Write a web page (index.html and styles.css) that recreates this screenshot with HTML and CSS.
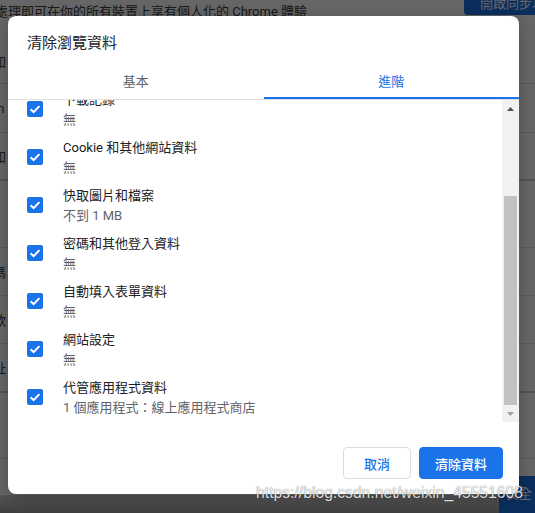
FILE: index.html
```html
<!DOCTYPE html>
<html lang="zh-Hant">
<head>
<meta charset="utf-8">
<title>清除瀏覽資料</title>
<link rel="stylesheet" href="styles.css">
</head>
<body>
<div class="page">
  <div class="page-top">
    <span class="intro">處理即可在你的所有裝置上享有個人化的 Chrome 體驗</span>
    <span class="sync-btn">開啟同步功能</span>
  </div>
  <div class="prow r1"><span class="ptxt">知</span></div>
  <div class="prow r2"><span class="ptxt">m</span></div>
  <div class="prow r3 strong"><span class="ptxt">知</span></div>
  <div class="prow r4"></div>
  <div class="prow r5"><span class="ptxt">碼</span></div>
  <div class="prow r6"><span class="ptxt">款</span></div>
  <div class="prow r7 strong"><span class="ptxt">址</span></div>
  <div class="prow r8"></div>
  <div class="prow r9"><span class="ptxt">o</span></div>
  <div class="pfoot"><span class="go-btn">安全</span></div>
</div>

<div class="scrim"></div>

<div class="dialog">
  <div class="dlg-title">清除瀏覽資料</div>
  <div class="tabs">
    <div class="tab">基本</div>
    <div class="tab active">進階</div>
  </div>
  <div class="scroll">
    <div class="list">
      <div class="list-inner">
        <div class="range">
          <span class="range-label">時間範圍</span>
          <span class="range-select">不限時間</span>
        </div>
        <div class="item">
          <span class="cb"><svg viewBox="0 0 16 16"><path d="M3.6 8.3l3 2.9 5.8-6.1"/></svg></span>
          <div class="txt"><div class="lbl">瀏覽記錄</div><div class="sub">無</div></div>
        </div>
        <div class="item">
          <span class="cb"><svg viewBox="0 0 16 16"><path d="M3.6 8.3l3 2.9 5.8-6.1"/></svg></span>
          <div class="txt"><div class="lbl">下載記錄</div><div class="sub">無</div></div>
        </div>
        <div class="item">
          <span class="cb"><svg viewBox="0 0 16 16"><path d="M3.6 8.3l3 2.9 5.8-6.1"/></svg></span>
          <div class="txt"><div class="lbl">Cookie 和其他網站資料</div><div class="sub">無</div></div>
        </div>
        <div class="item">
          <span class="cb"><svg viewBox="0 0 16 16"><path d="M3.6 8.3l3 2.9 5.8-6.1"/></svg></span>
          <div class="txt"><div class="lbl">快取圖片和檔案</div><div class="sub">不到 1 MB</div></div>
        </div>
        <div class="item">
          <span class="cb"><svg viewBox="0 0 16 16"><path d="M3.6 8.3l3 2.9 5.8-6.1"/></svg></span>
          <div class="txt"><div class="lbl">密碼和其他登入資料</div><div class="sub">無</div></div>
        </div>
        <div class="item">
          <span class="cb"><svg viewBox="0 0 16 16"><path d="M3.6 8.3l3 2.9 5.8-6.1"/></svg></span>
          <div class="txt"><div class="lbl">自動填入表單資料</div><div class="sub">無</div></div>
        </div>
        <div class="item">
          <span class="cb"><svg viewBox="0 0 16 16"><path d="M3.6 8.3l3 2.9 5.8-6.1"/></svg></span>
          <div class="txt"><div class="lbl">網站設定</div><div class="sub">無</div></div>
        </div>
        <div class="item">
          <span class="cb"><svg viewBox="0 0 16 16"><path d="M3.6 8.3l3 2.9 5.8-6.1"/></svg></span>
          <div class="txt"><div class="lbl">代管應用程式資料</div><div class="sub">1 個應用程式：線上應用程式商店</div></div>
        </div>
      </div>
    </div>
    <div class="sbar">
      <div class="sbtn up"><svg viewBox="0 0 7 4"><path d="M0 4L3.5 0L7 4z"/></svg></div>
      <div class="track"><div class="thumb"></div></div>
      <div class="sbtn down"><svg viewBox="0 0 7 4"><path d="M0 0L7 0L3.5 4z"/></svg></div>
    </div>
  </div>
  <div class="footer">
    <button class="btn cancel">取消</button>
    <button class="btn primary">清除資料</button>
  </div>
</div>

<div class="watermark">https://blog.csdn.net/weixin_45551608</div>
</body>
</html>
```

FILE: styles.css
```css
* { box-sizing: border-box; }
html, body { margin: 0; padding: 0; }
body {
  width: 535px;
  height: 513px;
  overflow: hidden;
  position: relative;
  background: #fff;
  font-family: Roboto, "Noto Sans CJK TC", sans-serif;
}

/* underlying settings page */
.page {
  height: 513px;
  display: flex;
  flex-direction: column;
  color: #5f6368;
  font-size: 13px;
  overflow: hidden;
}
.page-top {
  height: 24px;
  flex: none;
  display: flex;
  justify-content: space-between;
  align-items: center;
}
.intro {
  margin-left: -5px;
  white-space: nowrap;
  line-height: 24px;
  color: #3c4043;
}
.sync-btn {
  align-self: flex-start;
  margin-top: -14px;
  height: 29px;
  width: 71px;
  padding: 14px 0 0 16px;
  background: #1a73e8;
  color: #fff;
  font-size: 13px;
  line-height: 8px;
  white-space: nowrap;
  overflow: hidden;
  border-bottom-left-radius: 4px;
}
.prow {
  flex: none;
  display: flex;
  align-items: center;
  border-bottom: 1px solid #e4e4e4;
}
.prow.strong { border-bottom: 2px solid #cfcfcf; }
.ptxt { margin-left: -7px; color: #3c4043; }
.r1 { height: 60px; align-items: flex-end; padding-bottom: 12px; }
.r2 { height: 49px; }
.r3 { height: 48px; }
.r4 { height: 67px; }
.r5 { height: 48px; }
.r6 { height: 48px; }
.r7 { height: 49px; }
.r8 { height: 66px; }
.r9 { height: 36px; align-items: flex-end; padding-bottom: 2px; border-bottom: 0; }
.pfoot {
  flex: 1;
  background: linear-gradient(#d6d6d6, #9a9a9a);
  display: flex;
  justify-content: flex-end;
  align-items: flex-start;
}
.go-btn {
  margin-top: -19px;
  width: 36px;
  height: 38px;
  background: #1a73e8;
  color: #fff;
  font-size: 13px;
  line-height: 16px;
  padding: 10px 0 0 7px;
  white-space: nowrap;
  overflow: hidden;
  border-top-left-radius: 4px;
}

.scrim {
  position: absolute;
  inset: 0;
  background: rgba(0, 0, 0, 0.6);
}

/* dialog */
.dialog {
  position: absolute;
  left: 8px;
  top: 16px;
  width: 511px;
  height: 478px;
  background: #fff;
  border-radius: 8px;
  box-shadow: 0 4px 16px rgba(0, 0, 0, 0.25);
  display: flex;
  flex-direction: column;
  overflow: hidden;
}
.dlg-title {
  padding: 17px 19px 10px;
  font-size: 15px;
  line-height: 20px;
  color: #202124;
}
.tabs {
  display: flex;
  border-bottom: 1px solid #e0e0e0;
}
.tab {
  flex: 1;
  height: 36px;
  display: flex;
  align-items: center;
  justify-content: center;
  font-size: 13px;
  color: #5f6368;
  border-bottom: 2px solid transparent;
  padding-top: 1px;
}
.tab.active {
  color: #1a73e8;
  border-bottom-color: #1a73e8;
}

.scroll {
  height: 322px;
  flex: none;
  display: flex;
}
.list {
  flex: 1;
  overflow: hidden;
}
.list-inner { margin-top: -122px; }
.range {
  height: 59px;
  display: flex;
  align-items: center;
  gap: 16px;
  padding-left: 19px;
  font-size: 13px;
  color: #202124;
}
.range-select {
  border: 1px solid #dadce0;
  border-radius: 4px;
  padding: 4px 24px 4px 8px;
}
.item {
  height: 48px;
  display: flex;
  align-items: center;
  gap: 20px;
  padding-left: 19px;
}
.cb {
  width: 16px;
  height: 16px;
  flex: none;
  background: #1a73e8;
  border-radius: 2px;
  display: flex;
}
.cb svg {
  width: 16px;
  height: 16px;
  fill: none;
  stroke: #fff;
  stroke-width: 2;
}
.txt { display: flex; flex-direction: column; padding-top: 2px; }
.lbl {
  font-size: 13px;
  line-height: 20px;
  color: #202124;
}
.sub {
  font-size: 13px;
  line-height: 20px;
  color: #5f6368;
}

.sbar {
  width: 17px;
  flex: none;
  background: #f1f1f1;
  display: flex;
  flex-direction: column;
}
.sbtn {
  height: 17px;
  flex: none;
  display: flex;
  align-items: center;
  justify-content: center;
}
.sbtn svg { width: 7px; height: 4px; }
.sbtn.up svg { fill: #505050; }
.sbtn.down svg { fill: #a3a3a3; }
.track {
  flex: 1;
  display: flex;
  flex-direction: column;
  justify-content: flex-end;
  padding: 0 2px;
}
.thumb {
  height: 209px;
  background: #c1c1c1;
}

.footer {
  display: flex;
  justify-content: flex-end;
  gap: 8px;
  padding: 25px 16px 15px;
}
.btn {
  height: 32px;
  border-radius: 4px;
  font-family: Roboto, "Noto Sans CJK TC", sans-serif;
  font-size: 13px;
  font-weight: 500;
  cursor: pointer;
}
.btn.cancel {
  background: #fff;
  color: #1a73e8;
  border: 1px solid #dadce0;
  padding: 0 20px;
}
.btn.primary {
  background: #1a73e8;
  color: #fff;
  border: 1px solid #1a73e8;
  padding: 0 15px;
}

.watermark {
  position: absolute;
  right: 12px;
  top: 483px;
  font-family: "Liberation Sans", Arial, sans-serif;
  font-size: 15.7px;
  line-height: 20px;
  color: rgba(255, 255, 255, 0.85);
  text-shadow: 0 0 1px rgba(0, 0, 0, 0.6);
  white-space: nowrap;
}
```
